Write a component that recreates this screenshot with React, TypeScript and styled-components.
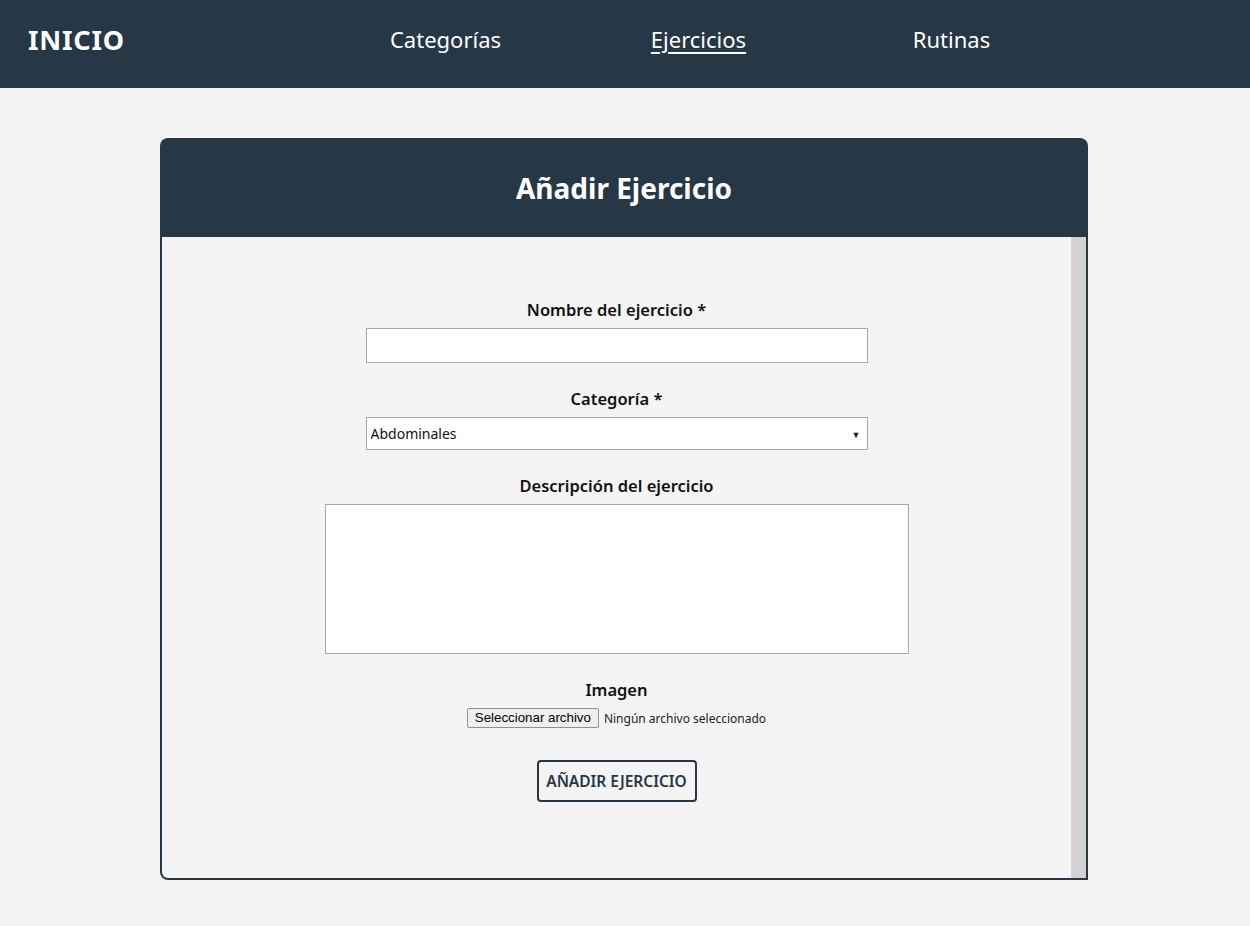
import React from "react";
import styled, { createGlobalStyle } from "styled-components";

const dark = "#263746";

const GlobalStyle = createGlobalStyle`
  html, body {
    margin: 0;
    padding: 0;
    background: #f4f4f4;
    font-family: "Noto Sans", "Open Sans", sans-serif;
  }
  * { box-sizing: border-box; }
`;

const Header = styled.header`
  height: 88px;
  background: ${dark};
  display: flex;
  align-items: center;
  padding: 0 28px 10px;
`;

const Logo = styled.a`
  color: #fff;
  font-size: 27px;
  font-weight: 700;
  letter-spacing: 0.8px;
  text-decoration: none;
  width: 96px;
`;

const NavLinks = styled.nav`
  display: flex;
  margin-left: 195px;
`;

const NavLink = styled.a<{ $active?: boolean }>`
  width: 253px;
  text-align: center;
  color: #fff;
  font-size: 22px;
  text-decoration: ${(p) => (p.$active ? "underline" : "none")};
  text-underline-offset: 4px;
  text-decoration-thickness: 2px;
`;

const Card = styled.section`
  width: 928px;
  margin: 50px 0 0 160px;
`;

const CardHeader = styled.div`
  height: 99px;
  background: ${dark};
  border-radius: 8px 8px 0 0;
  display: flex;
  align-items: center;
  justify-content: center;
`;

const Title = styled.h1`
  margin: 0;
  color: #fff;
  font-size: 28px;
  font-weight: 700;
`;

const CardBody = styled.div`
  height: 643px;
  border: 2px solid ${dark};
  border-top: none;
  border-radius: 0 0 0 8px;
  display: flex;
`;

const ScrollTrack = styled.div`
  width: 15px;
  background: #d3d3d3;
  flex-shrink: 0;
`;

const Form = styled.form`
  flex: 1;
  display: flex;
  flex-direction: column;
  align-items: center;
  padding-top: 62px;
`;

const Field = styled.div`
  display: flex;
  flex-direction: column;
  align-items: center;
  margin-bottom: 25px;
`;

const Label = styled.label`
  font-size: 16.5px;
  font-weight: 600;
  color: #111;
  line-height: 22px;
  margin-bottom: 7px;
`;

const TextInput = styled.input`
  width: 502px;
  height: 35px;
  border: 1px solid #a9a9a9;
  background: #fff;
  font-family: inherit;
  font-size: 14px;
  padding: 0 6px;
`;

const SelectBox = styled.div`
  position: relative;
  width: 502px;
  height: 33px;
`;

const Select = styled.select`
  width: 100%;
  height: 100%;
  border: 1px solid #a9a9a9;
  background: #fff;
  font-family: inherit;
  font-size: 14px;
  color: #111;
  padding: 0 4px;
  appearance: none;
  border-radius: 0;
`;

const Caret = styled.span`
  position: absolute;
  right: 7px;
  top: 50%;
  transform: translateY(-50%);
  font-size: 9px;
  color: #111;
  pointer-events: none;
`;

const TextArea = styled.textarea`
  width: 584px;
  height: 150px;
  border: 1px solid #a9a9a9;
  background: #fff;
  resize: none;
  font-family: inherit;
  font-size: 14px;
`;

const FileRow = styled.div`
  display: flex;
  align-items: center;
  gap: 5px;
`;

const FileButton = styled.label`
  display: inline-block;
  height: 20px;
  line-height: 18px;
  padding: 0 7px;
  border: 1px solid #8f8f8f;
  border-radius: 2px;
  background: #efefef;
  font-family: "Liberation Sans", Arial, sans-serif;
  font-size: 13.3px;
  color: #000;
`;

const FileName = styled.span`
  font-size: 12px;
  color: #222;
`;

const HiddenFile = styled.input`
  display: none;
`;

const Submit = styled.button`
  margin-top: 7px;
  width: 160px;
  height: 42px;
  border: 2px solid ${dark};
  border-radius: 4px;
  background: transparent;
  color: ${dark};
  font-family: inherit;
  font-size: 15.5px;
  font-weight: 600;
`;

export default function App() {
  return (
    <>
      <GlobalStyle />
      <Header>
        <Logo href="#">INICIO</Logo>
        <NavLinks>
          <NavLink href="#">Categorías</NavLink>
          <NavLink href="#" $active>
            Ejercicios
          </NavLink>
          <NavLink href="#">Rutinas</NavLink>
        </NavLinks>
      </Header>
      <Card>
        <CardHeader>
          <Title>Añadir Ejercicio</Title>
        </CardHeader>
        <CardBody>
          <Form onSubmit={(e) => e.preventDefault()}>
            <Field>
              <Label htmlFor="nombre">Nombre del ejercicio *</Label>
              <TextInput id="nombre" type="text" />
            </Field>
            <Field>
              <Label htmlFor="categoria">Categoría *</Label>
              <SelectBox>
                <Select id="categoria" defaultValue="abdominales">
                  <option value="abdominales">Abdominales</option>
                  <option value="pecho">Pecho</option>
                  <option value="espalda">Espalda</option>
                </Select>
                <Caret>▼</Caret>
              </SelectBox>
            </Field>
            <Field>
              <Label htmlFor="descripcion">Descripción del ejercicio</Label>
              <TextArea id="descripcion" />
            </Field>
            <Field>
              <Label>Imagen</Label>
              <FileRow>
                <FileButton htmlFor="imagen">Seleccionar archivo</FileButton>
                <FileName>Ningún archivo seleccionado</FileName>
                <HiddenFile id="imagen" type="file" />
              </FileRow>
            </Field>
            <Submit type="submit">AÑADIR EJERCICIO</Submit>
          </Form>
          <ScrollTrack />
        </CardBody>
      </Card>
    </>
  );
}
